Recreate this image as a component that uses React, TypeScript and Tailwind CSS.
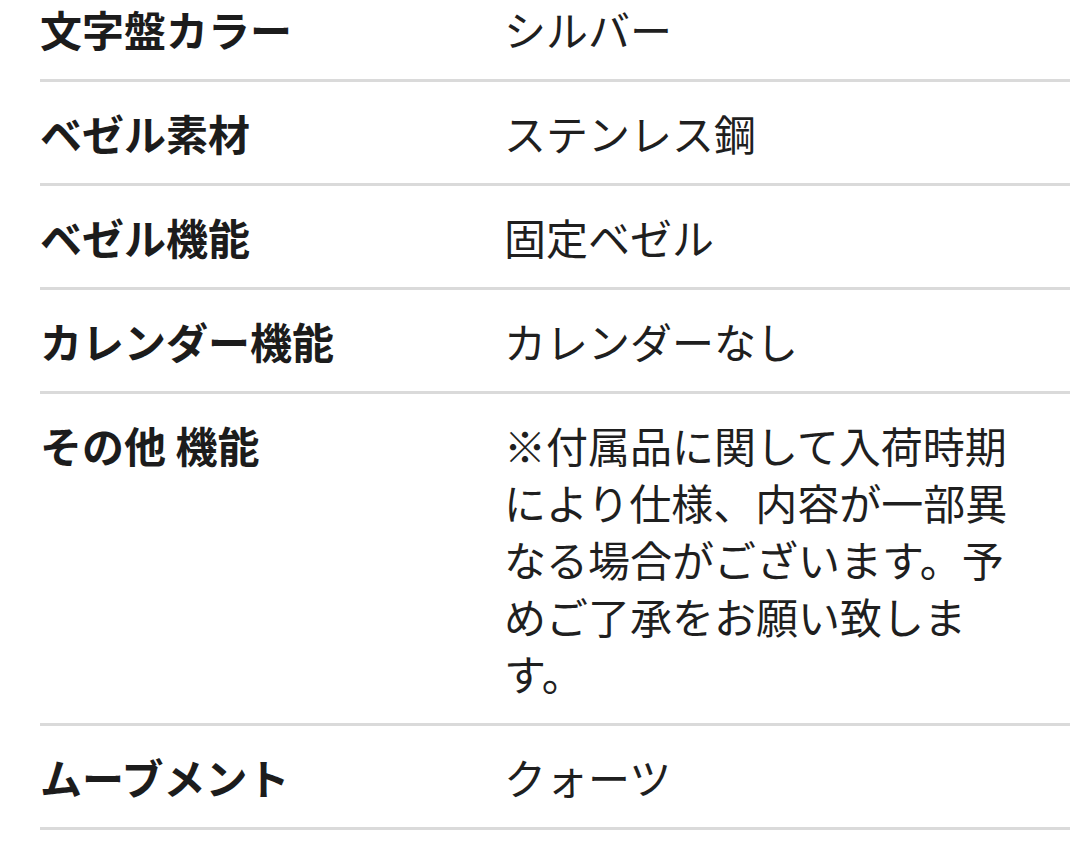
const rows: { label: string; value: string }[] = [
  { label: "文字盤カラー", value: "シルバー" },
  { label: "ベゼル素材", value: "ステンレス鋼" },
  { label: "ベゼル機能", value: "固定ベゼル" },
  { label: "カレンダー機能", value: "カレンダーなし" },
  {
    label: "その他 機能",
    value:
      "※付属品に関して入荷時期により仕様、内容が一部異なる場合がございます。予めご了承をお願い致します。",
  },
  { label: "ムーブメント", value: "クォーツ" },
];

export default function App() {
  return (
    <div
      className="min-h-screen bg-white pl-[40px] pr-[10px]"
      style={{ fontFamily: '"Noto Sans CJK JP", "Noto Sans", sans-serif' }}
    >
      {rows.map((row, i) => (
        <div
          key={row.label}
          className={
            i === 0
              ? "flex items-start border-b-[3px] border-[#dadada] pb-[22px]"
              : "flex items-start border-b-[3px] border-[#dadada] py-[22px]"
          }
        >
          <div className="w-[464px] shrink-0 text-[42px] leading-[57px] font-bold text-[#1c1c1c]">
            {row.label}
          </div>
          <div className="w-[520px] text-[42px] leading-[57px] text-[#1f1f1f]">
            {row.value}
          </div>
        </div>
      ))}
    </div>
  );
}
